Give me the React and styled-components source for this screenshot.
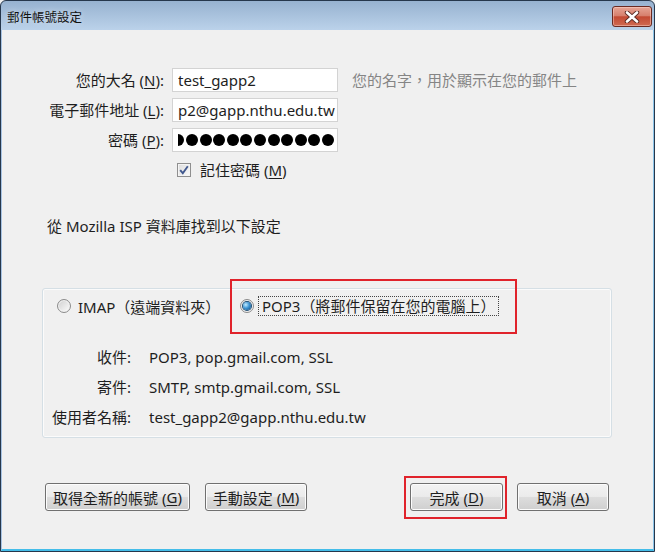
import { useLayoutEffect, useRef } from 'react';
import styled, { createGlobalStyle } from 'styled-components';

const GlobalStyle = createGlobalStyle`
    html, body {
        margin: 0;
        padding: 0;
        background: #f0f0f0;
    }
    body {
        font-family: "Noto Sans", "Noto Sans CJK TC", sans-serif;
        color: #1e1e1e;
    }
`

const Window = styled.div`
    width: 655px;
    height: 552px;
    box-sizing: border-box;
    display: flex;
    flex-direction: column;
    border: 1px solid #26374c;
    border-radius: 6px 6px 0 0;
    background: linear-gradient(#97b2d0, #bbd2ea 29px);
    overflow: hidden;
`
const TitleBar = styled.div`
    height: 29px;
    flex-shrink: 0;
    display: flex;
    align-items: center;
    justify-content: space-between;
    padding: 0 2px 0 6px;
`
const Title = styled.div`
    font-family: "Noto Sans CJK TC", sans-serif;
    font-size: 12.5px;
    color: #111;
    margin-top: 1px;
    text-shadow: 0 0 6px rgba(255, 255, 255, 0.6);
`
const CloseButton = styled.div`
    width: 40px;
    height: 21px;
    margin-top: 2px;
    box-sizing: border-box;
    border: 1px solid #6a2a22;
    border-radius: 3px;
    background: linear-gradient(#e6a595 0%, #d7806e 45%, #c34a33 52%, #cf6a52 100%);
    box-shadow: inset 0 0 0 1px rgba(255, 220, 210, 0.45);
    display: flex;
    align-items: center;
    justify-content: center;
`
const Client = styled.div`
    flex: 1;
    position: relative;
    background: #f0f0f0;
    border-left: 1px solid #a7c3e3;
    border-right: 1px solid #8cc4e8;
    border-bottom: 2px solid #44bde9;
    padding: 38px 0 0 40px;
    font-size: 15px;
`
const FormGrid = styled.div`
    margin-left: -5px;
    display: grid;
    grid-template-columns: 126px 166px auto;
    grid-auto-rows: 24px;
    column-gap: 9px;
    row-gap: 6px;
`
const FieldLabel = styled.div`
    text-align: right;
    line-height: 24px;
    white-space: nowrap;
    margin-right: -1px;
`
const Key = styled.span`
    text-decoration: underline;
    text-underline-offset: 2px;
`
const TextInput = styled.input`
    box-sizing: border-box;
    width: 166px;
    height: 24px;
    margin: 0;
    border: 1px solid #d3d3d3;
    border-radius: 0;
    background: #fff;
    padding: 0 2px 0 5px;
    font-family: inherit;
    font-size: 15px;
    color: #1e1e1e;
    outline: none;
`
const Field = styled.div`
    box-sizing: border-box;
    height: 24px;
    border: 1px solid #d3d3d3;
    background: #fff;
    padding: 0 3px 0 5px;
    display: flex;
`
const DotClip = styled.div`
    flex: 1;
    min-width: 0;
    overflow: hidden;
    display: flex;
    align-items: center;
    justify-content: flex-end;
`
const Dot = styled.span`
    flex-shrink: 0;
    width: 12px;
    height: 12px;
    border-radius: 50%;
    background: #000;
    margin-left: 1.6px;
`
const Hint = styled.div`
    margin-left: 5px;
    line-height: 24px;
    color: #858585;
    white-space: nowrap;
`
const CheckRow = styled.label`
    grid-column: 2 / 4;
    display: flex;
    align-items: center;
    gap: 9px;
    padding-left: 5px;
    line-height: 24px;
`
const CheckBox = styled.span`
    width: 14px;
    height: 14px;
    box-sizing: border-box;
    border: 1px solid #8f8f8f;
    background: linear-gradient(135deg, #dcdcdc, #fbfbfb);
    box-shadow: inset 0 0 0 1px #f4f4f4;
    display: flex;
    align-items: center;
    justify-content: center;
`
const FoundText = styled.div`
    margin: 34px 0 0 5px;
    line-height: 20px;
`
const GroupBox = styled.div`
    margin-top: 52px;
    width: 570px;
    height: 150px;
    box-sizing: border-box;
    border: 1px solid #d5dfe5;
    border-radius: 3px;
    box-shadow: inset 0 0 0 1px #fbfbfb;
`
const RadioRow = styled.div`
    display: flex;
    align-items: center;
    margin-top: 7px;
    padding-left: 14px;
    height: 20px;
`
const RadioOption = styled.label`
    position: relative;
    display: flex;
    align-items: center;
    flex-shrink: 0;
    width: ${p => p.$width || 'auto'};
    gap: ${p => p.$gap || '7px'};
    white-space: nowrap;
`
const RadioCircle = styled.span`
    width: 14px;
    height: 14px;
    box-sizing: border-box;
    border-radius: 50%;
    border: 1px solid #8b8b8b;
    background: linear-gradient(135deg, #cfcfcf, #fdfdfd);
    box-shadow: inset 0 0 0 1px #f2f2f2;
    display: flex;
    align-items: center;
    justify-content: center;
    &::after {
        content: '';
        display: ${p => (p.$checked ? 'block' : 'none')};
        width: 8px;
        height: 8px;
        border-radius: 50%;
        background: radial-gradient(circle at 35% 35%, #c4ecff 0%, #3f97d6 45%, #0c4679 100%);
        box-shadow: 0 0 0 1px #1d4d74;
    }
`
const FocusText = styled.span`
    border: 1px dotted #444;
    padding: 0 3px;
    line-height: 18px;
`
const Highlight = styled.div`
    position: absolute;
    top: ${p => p.$top}px;
    left: ${p => p.$left}px;
    right: ${p => p.$right}px;
    bottom: ${p => p.$bottom}px;
    border: 2px solid #e0232b;
    pointer-events: none;
`
const InfoGrid = styled.div`
    margin-top: 26px;
    display: grid;
    grid-template-columns: 88px auto;
    grid-auto-rows: 30px;
    column-gap: 18px;
    line-height: 30px;
`
const InfoLabel = styled.div`
    text-align: right;
    white-space: nowrap;
`
const InfoValue = styled.div`
    white-space: nowrap;
`
const ButtonRow = styled.div`
    margin: 45px 0 0 3px;
    width: 564px;
    display: flex;
    justify-content: space-between;
`
const ButtonGroup = styled.div`
    display: flex;
    gap: ${p => p.$gap}px;
`
const Button = styled.div`
    position: relative;
    width: ${p => p.$width}px;
    height: 28px;
    box-sizing: border-box;
    border: 1px solid #707070;
    border-radius: 3px;
    background: linear-gradient(#f3f3f3 0%, #ebebeb 48%, #dddddd 52%, #cfcfcf 100%);
    box-shadow: inset 0 0 0 1px #fcfcfc;
    display: flex;
    align-items: center;
    justify-content: center;
    white-space: nowrap;
`

function ScrolledInput({ value }) {
    const ref = useRef(null);
    useLayoutEffect(() => {
        if (ref.current) ref.current.scrollLeft = ref.current.scrollWidth;
    }, [value]);
    return <TextInput ref={ref} value={value} readOnly />;
}

function App() {
    const dots = Array.from({ length: 12 });
    return (
        <>
            <GlobalStyle />
            <Window>
                <TitleBar>
                    <Title>郵件帳號設定</Title>
                    <CloseButton>
                        <svg width="16" height="12" viewBox="0 0 16 12">
                            <path d="M3 1.5 L13 10.5 M13 1.5 L3 10.5" stroke="#5a2a24" strokeWidth="4.4" strokeLinecap="round" />
                            <path d="M3 1.5 L13 10.5 M13 1.5 L3 10.5" stroke="#ffffff" strokeWidth="2.6" strokeLinecap="round" />
                        </svg>
                    </CloseButton>
                </TitleBar>
                <Client>
                    <FormGrid>
                        <FieldLabel>您的大名 (<Key>N</Key>):</FieldLabel>
                        <TextInput value="test_gapp2" readOnly />
                        <Hint>您的名字，用於顯示在您的郵件上</Hint>

                        <FieldLabel>電子郵件地址 (<Key>L</Key>):</FieldLabel>
                        <ScrolledInput value="test_gapp2@gapp.nthu.edu.tw" />
                        <span />

                        <FieldLabel>密碼 (<Key>P</Key>):</FieldLabel>
                        <Field>
                            <DotClip>
                                {dots.map((_, i) => <Dot key={i} />)}
                            </DotClip>
                        </Field>
                        <span />

                        <span />
                        <CheckRow>
                            <CheckBox>
                                <svg width="10" height="10" viewBox="0 0 10 10">
                                    <path d="M1.2 5.2 L3.8 8.2 L8.8 1.2" fill="none" stroke="#42598f" strokeWidth="1.9" />
                                </svg>
                            </CheckBox>
                            <span>記住密碼 (<Key>M</Key>)</span>
                        </CheckRow>
                    </FormGrid>

                    <FoundText>從 Mozilla ISP 資料庫找到以下設定</FoundText>

                    <GroupBox>
                        <RadioRow>
                            <RadioOption $width="183px">
                                <RadioCircle />
                                <span>IMAP（遠端資料夾）</span>
                            </RadioOption>
                            <RadioOption $gap="4px">
                                <RadioCircle $checked />
                                <FocusText>POP3（將郵件保留在您的電腦上）</FocusText>
                                <Highlight $top={-17} $left={-10} $right={-18} $bottom={-18} />
                            </RadioOption>
                        </RadioRow>
                        <InfoGrid>
                            <InfoLabel>收件:</InfoLabel>
                            <InfoValue>POP3, pop.gmail.com, SSL</InfoValue>
                            <InfoLabel>寄件:</InfoLabel>
                            <InfoValue>SMTP, smtp.gmail.com, SSL</InfoValue>
                            <InfoLabel>使用者名稱:</InfoLabel>
                            <InfoValue>test_gapp2@gapp.nthu.edu.tw</InfoValue>
                        </InfoGrid>
                    </GroupBox>

                    <ButtonRow>
                        <ButtonGroup $gap={15}>
                            <Button $width={145}>取得全新的帳號 (<Key>G</Key>)</Button>
                            <Button $width={102}>手動設定 (<Key>M</Key>)</Button>
                        </ButtonGroup>
                        <ButtonGroup $gap={14}>
                            <Button $width={93}>
                                完成 (<Key>D</Key>)
                                <Highlight $top={-8} $left={-7} $right={-5} $bottom={-9} />
                            </Button>
                            <Button $width={92}>取消 (<Key>A</Key>)</Button>
                        </ButtonGroup>
                    </ButtonRow>
                </Client>
            </Window>
        </>
    );
}

export default App;
